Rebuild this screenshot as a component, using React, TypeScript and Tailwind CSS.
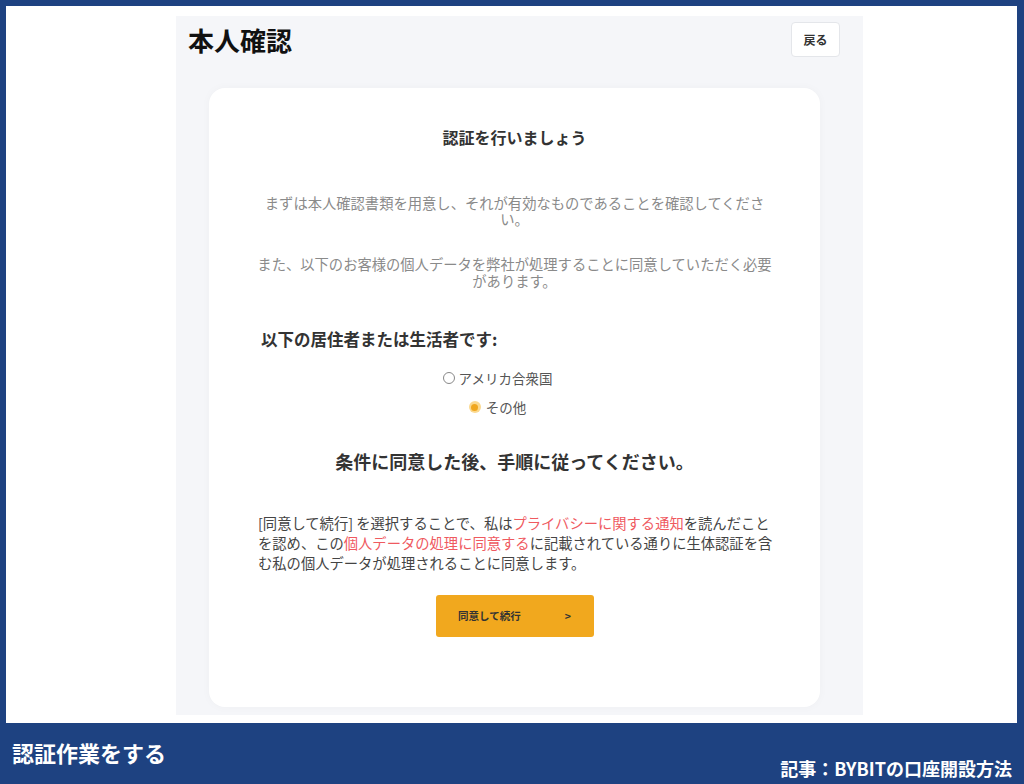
import React from "react";

const jp = { fontFamily: '"Noto Sans CJK JP", "Noto Sans", sans-serif' };

export default function App() {
  return (
    <div className="w-[1024px] h-[784px] bg-[#1e4281] flex flex-col overflow-hidden" style={jp}>
      <div className="pt-[6px] pl-[6px] pr-[7px]">
        <div className="bg-white h-[717px] pl-[170px] pt-[10px]">
          <div className="w-[687px] h-[699px] bg-[#f5f6f9] pl-[12px] pr-[23px] pt-[6px]">
            <div className="flex items-center justify-between h-[35px]">
              <div className="text-[26px] font-bold text-[#111] leading-[34px]">本人確認</div>
              <button className="w-[49px] h-[35px] bg-white border border-[#e4e6ea] rounded-[4px] text-[12px] font-bold text-[#333]">
                戻る
              </button>
            </div>
            <div className="ml-[21px] mt-[31px] w-[611px] h-[619px] bg-white rounded-[16px] shadow-[0_0_10px_rgba(0,0,0,0.03)] px-[49px] pt-[38px]">
              <div className="text-center text-[16px] font-bold leading-[22px] text-[#333]">認証を行いましょう</div>
              <p className="mt-[47px] -mx-[4px] text-center text-[14.3px] leading-[16px] text-[#8a8a8a]">
                まずは本人確認書類を用意し、それが有効なものであることを確認してください。
              </p>
              <p className="mt-[28px] -mx-[4px] text-center text-[14.3px] leading-[17px] text-[#8a8a8a]">
                また、以下のお客様の個人データを弊社が処理することに同意していただく必要があります。
              </p>
              <div className="mt-[39px] ml-[3px] text-[16.5px] font-bold leading-[22px] text-[#333]">以下の居住者または生活者です:</div>
              <div className="mt-[17px] pr-[34px] flex flex-col items-center gap-[7px] text-[13.5px] leading-[22px] text-[#555]">
                <div className="flex items-center gap-[4px]">
                  <span className="w-[12px] h-[12px] rounded-full border border-[#888] bg-white" />
                  <span>アメリカ合衆国</span>
                </div>
                <div className="flex items-center gap-[5px]">
                  <span className="w-[12px] h-[12px] rounded-full bg-[#fbd98f] flex items-center justify-center">
                    <span className="w-[7px] h-[7px] rounded-full bg-[#f0a71f]" />
                  </span>
                  <span>その他</span>
                </div>
              </div>
              <div className="mt-[31px] text-center text-[18px] font-bold leading-[24px] text-[#333]">
                条件に同意した後、手順に従ってください。
              </div>
              <p className="mt-[40px] -mr-[6px] text-[14.3px] leading-[20px] text-[#444]">
                [同意して続行] を選択することで、私は
                <span className="text-[#ef5a5f]">プライバシーに関する通知</span>
                を読んだことを認め、この
                <span className="text-[#ef5a5f]">個人データの処理に同意する</span>
                に記載されている通りに生体認証を含む私の個人データが処理されることに同意します。
              </p>
              <div className="mt-[22px] flex justify-center">
                <button className="w-[158px] h-[42px] bg-[#f1a81e] rounded-[3px] flex items-center justify-center gap-[44px] text-[10.5px] font-bold text-[#333]">
                  <span>同意して続行</span>
                  <span>&gt;</span>
                </button>
              </div>
            </div>
          </div>
        </div>
      </div>
      <div className="flex-1 flex justify-between px-[12px]">
        <div className="pt-[15px] text-[22px] font-bold leading-[28px] text-white">認証作業をする</div>
        <div className="self-end pb-[4px] text-[18px] font-bold leading-[24px] text-white">記事：BYBITの口座開設方法</div>
      </div>
    </div>
  );
}
